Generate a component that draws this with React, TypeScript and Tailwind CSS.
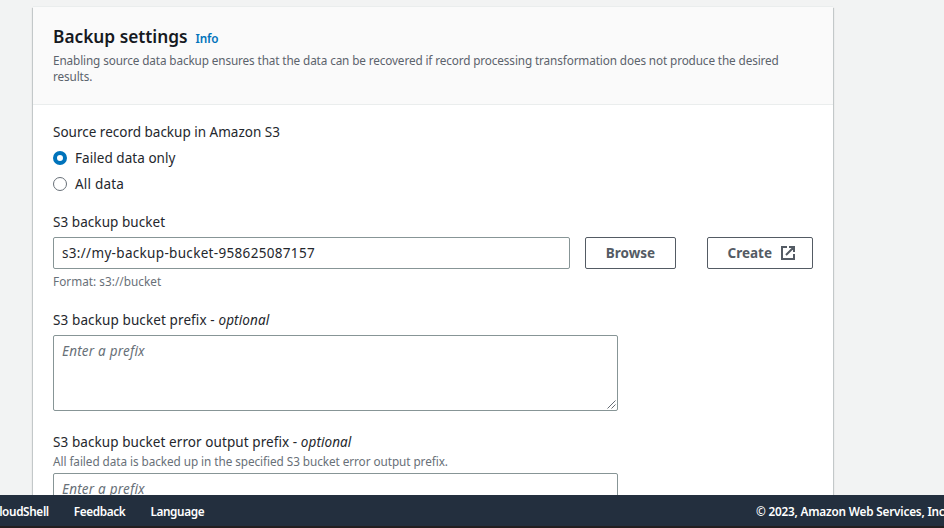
import React from "react";

function Label({ children, optional, className }: { children: React.ReactNode; optional?: boolean; className: string }) {
  return (
    <div className={`h-[22px] whitespace-nowrap text-[13.5px] leading-[22px] text-[#24272d] ${className}`}>
      {children}
      {optional && <i> optional</i>}
    </div>
  );
}

function Radio({ label, checked, className }: { label: string; checked?: boolean; className: string }) {
  return (
    <label className="flex h-[22px] items-center gap-2">
      <span
        className={
          checked
            ? "h-[14px] w-[14px] rounded-full border-[4px] border-[#0073bb] bg-white"
            : "h-[14px] w-[14px] rounded-full border border-[#687078] bg-white"
        }
      />
      <span className={`text-[13.5px] leading-[22px] text-[#24272d] ${className}`}>{label}</span>
    </label>
  );
}

function PrefixArea() {
  return (
    <div className="relative mt-1 h-[76px] w-[565px] rounded-[2px] border border-[#879596] bg-white px-2 py-1">
      <span className="block text-[13.5px] leading-[22px] tracking-[0.2px] text-[#687078] italic">Enter a prefix</span>
      <svg className="absolute right-[1px] bottom-[1px]" width="9" height="9" viewBox="0 0 9 9" fill="none" stroke="#545b64" strokeWidth="0.9">
        <path d="M0.5 8.5 8.5 0.5M4.5 8.5 8.5 4.5" />
      </svg>
    </div>
  );
}

export default function App() {
  return (
    <div className="flex h-[528px] w-[944px] flex-col overflow-hidden bg-[#f2f3f3] font-['Noto_Sans','Open_Sans',sans-serif]">
      <main className="min-h-0 flex-1 overflow-hidden pt-[7px] pl-[33px]">
        <section className="h-[600px] w-[800px] bg-white shadow-[0_1px_1px_0_rgba(0,28,36,0.3),1px_1px_1px_0_rgba(0,28,36,0.15),-1px_1px_1px_0_rgba(0,28,36,0.15),0_-1px_0_0_#eaeded]">
          <header className="h-[98px] border-b border-[#eaeded] bg-[#fafafa] px-5 pt-[19px]">
            <div className="flex h-[22px] items-baseline gap-2 whitespace-nowrap">
              <h2 className="text-[17.3px] leading-[22px] font-semibold text-[#16191f]">Backup settings</h2>
              <a className="text-[11.75px] leading-[22px] font-semibold tracking-[-0.2px] text-[#0073bb]">Info</a>
            </div>
            <p className="mt-1 text-[11.75px] leading-4 tracking-[-0.12px] whitespace-nowrap text-[#5c636c]">
              <span className="block">
                Enabling source data backup ensures that the data can be recovered if record processing transformation does not produce the desired
              </span>
              <span className="block">results.</span>
            </p>
          </header>
          <div className="px-5 pt-4">
            <Label className="tracking-[0px]">
              <span>Source record backup in Amazon S3</span>
            </Label>
            <div className="mt-1 flex flex-col gap-1">
              <Radio label="Failed data only" checked className="tracking-[0.05px]" />
              <Radio label="All data" className="tracking-[0.2px]" />
            </div>
            <div className="mt-4">
              <Label className="tracking-[0.06px]">
                <span>S3 backup bucket</span>
              </Label>
              <div className="mt-1 flex h-8">
                <div className="w-[517px] rounded-[2px] border border-[#879596] bg-white px-2 text-[13.5px] leading-[30px] tracking-[0.32px] text-[#24272d]">
                  <span>s3://my-backup-bucket-958625087157</span>
                </div>
                <button className="ml-[15px] w-[91px] rounded-[2px] border border-[#545b64] bg-white text-[13.5px] leading-[30px] font-bold text-[#545b64]">
                  Browse
                </button>
                <button className="ml-[31px] flex w-[106px] items-center justify-end gap-2 rounded-[2px] border border-[#545b64] bg-white pr-4 text-[13.5px] leading-[30px] font-bold text-[#545b64]">
                  <span>Create</span>
                  <svg width="16" height="16" viewBox="0 0 16 16" fill="none" stroke="#545b64" strokeWidth="2">
                    <path d="M7 2H2v12h12V9M9 2h5v5M6 10l8-8" />
                  </svg>
                </button>
              </div>
              <p className="mt-1 text-[11.75px] leading-4 tracking-[0.03px] text-[#687078]">Format: s3://bucket</p>
            </div>
            <div className="mt-5">
              <Label optional className="tracking-[0.11px]">
                <span>S3 backup bucket prefix -</span>
              </Label>
              <PrefixArea />
            </div>
            <div className="mt-5">
              <Label optional className="tracking-[0.08px]">
                <span>S3 backup bucket error output prefix -</span>
              </Label>
              <p className="text-[11.75px] leading-4 tracking-[-0.06px] text-[#687078]">
                All failed data is backed up in the specified S3 bucket error output prefix.
              </p>
              <PrefixArea />
            </div>
          </div>
        </section>
      </main>
      <footer className="z-10 flex h-[33px] shrink-0 items-start justify-between border-b-2 border-[#231f20] bg-[#232f3e] text-[11.75px] leading-8 font-semibold tracking-[-0.36px] whitespace-nowrap text-white">
        <nav className="-ml-2 flex gap-[25px]">
          <a>CloudShell</a>
          <a>Feedback</a>
          <a>Language</a>
        </nav>
        <span className="w-[188px] tracking-[-0.19px]">© 2023, Amazon Web Services, Inc. or its affiliates.</span>
      </footer>
    </div>
  );
}
